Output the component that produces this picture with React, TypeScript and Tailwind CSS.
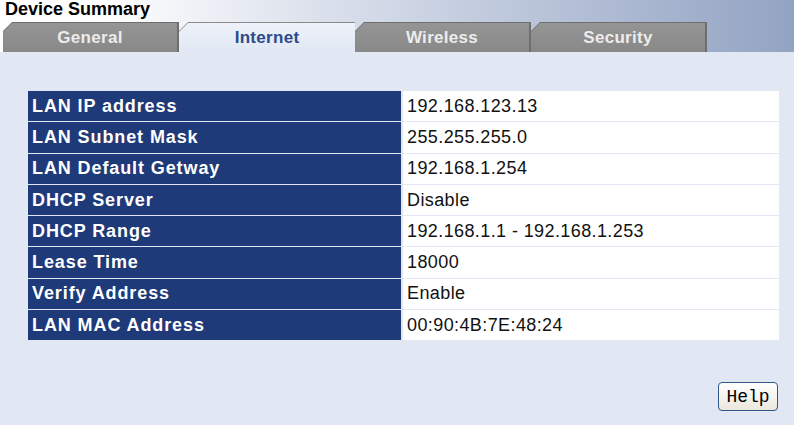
import React from "react";

const rows: [string, string][] = [
  ["LAN IP address", "192.168.123.13"],
  ["LAN Subnet Mask", "255.255.255.0"],
  ["LAN Default Getway", "192.168.1.254"],
  ["DHCP Server", "Disable"],
  ["DHCP Range", "192.168.1.1 - 192.168.1.253"],
  ["Lease Time", "18000"],
  ["Verify Address", "Enable"],
  ["LAN MAC Address", "00:90:4B:7E:48:24"],
];

const tabs = ["General", "Internet", "Wireless", "Security"];

function Tab({ label, active }: { label: string; active: boolean }) {
  if (active) {
    return (
      <div className="w-[176px] h-[30px] [clip-path:polygon(9px_0,100%_0,100%_100%,0_100%,0_9px)] bg-[#8a8a8a] pt-px">
        <div className="h-full [clip-path:polygon(9px_0,100%_0,100%_100%,0_100%,0_9px)] bg-gradient-to-b from-[#eef2f9] to-[#e1e8f4] flex items-center justify-center text-[17px] font-bold text-[#2b4b8c] tracking-[0.3px]">
          {label}
        </div>
      </div>
    );
  }
  return (
    <div className="w-[176px] h-[30px] [clip-path:polygon(9px_0,100%_0,100%_100%,0_100%,0_9px)] bg-[#6e6e6e] pt-px pr-[2px]">
      <div className="h-full [clip-path:polygon(9px_0,100%_0,100%_100%,0_100%,0_9px)] bg-gradient-to-b from-[#959595] to-[#888888] flex items-center justify-center text-[17px] font-bold text-[#ececec] tracking-[0.3px]">
        {label}
      </div>
    </div>
  );
}

export default function App() {
  return (
    <div className="w-[794px] h-[425px] overflow-hidden bg-[#e1e8f4] font-['Liberation_Sans',Arial,sans-serif]">
      {/* header with tabs */}
      <div className="h-[52px] bg-gradient-to-r from-white from-[12%] to-[#93a3c3] flex flex-col">
        <div className="h-[22px] pl-[5px] text-[18px] font-bold leading-[19px] text-black">
          Device Summary
        </div>
        <div className="flex pl-[3px]">
          {tabs.map((t) => (
            <Tab key={t} label={t} active={t === "Internet"} />
          ))}
        </div>
      </div>

      {/* summary table */}
      <div className="mt-[39px] ml-[28px] mr-[15px] grid grid-cols-[373px_1fr] gap-x-[2px] gap-y-px">
        {rows.map(([k, v]) => (
          <React.Fragment key={k}>
            <div className="h-[30.3px] bg-[#1f3a78] text-white font-bold text-[18px] tracking-[0.9px] pl-[4px] flex items-center">
              {k}
            </div>
            <div className="h-[30.3px] bg-white text-[#111] text-[18px] tracking-[0.4px] pl-[4px] flex items-center">
              {v}
            </div>
          </React.Fragment>
        ))}
      </div>

      <div className="flex justify-end pr-[16px] mt-[42px]">
        <button className="w-[60px] h-[29px] rounded-[4px] border border-[#2d5888] bg-gradient-to-b from-white to-[#ebe8dc] font-['Liberation_Mono','Courier_New',monospace] text-[18px] text-black leading-none">
          Help
        </button>
      </div>
    </div>
  );
}
